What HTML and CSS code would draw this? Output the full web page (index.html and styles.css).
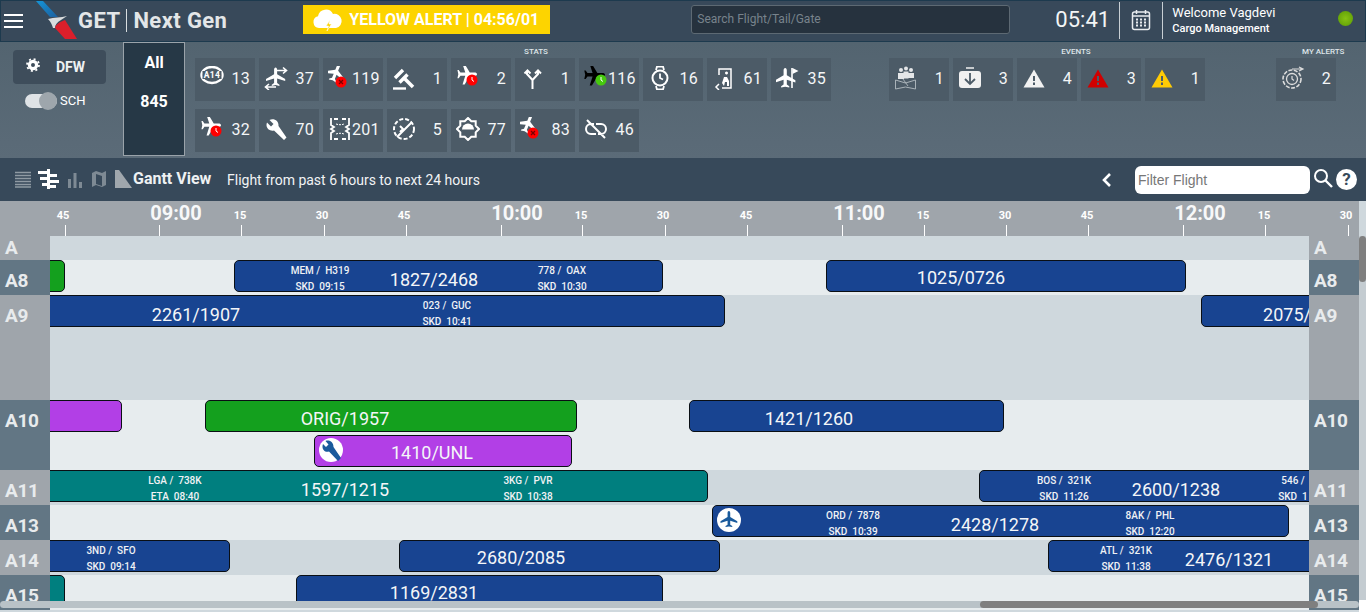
FILE: index.html
```html
<!DOCTYPE html>
<html>
<head>
    <meta charset="utf-8">
    <title>GET Next Gen</title>
    <link rel="stylesheet" href="styles.css">
</head>
<body>
<svg class="defs" width="0" height="0">
    <defs>
        <path id="plane" d="M12 0c1.200 0 1.900 1.200 1.900 3v5.500L24 14.500v2.500l-10.100-3.200v5.700l2.900 2V23L12 22l-4.800 1v-1.500l2.900-2v-5.700L0 17v-2.500l10.100-6V3C10.100 1.200 10.800 0 12 0z"/>
        <linearGradient id="blueband" x1="0" y1="0" x2="1" y2="1">
            <stop offset="0" stop-color="#1595d8"/>
            <stop offset="1" stop-color="#1c5f9e"/>
        </linearGradient>
    </defs>
</svg>

<header class="topbar">
    <div class="burger"><span></span><span></span><span></span></div>
    <svg class="logo" viewBox="0 0 44 41">
        <path d="M0 1h7l15 16h-8z" fill="url(#blueband)"/>
        <path d="M12 19c6-2 13-1 19-3l-6 4c-4 2-6 5-6 8h-2c-1-3-2-6-5-9z" fill="#d9dcde"/>
        <path d="M19 28c1-4 5-6 10-8l12 19H29z" fill="#db1f2b"/>
    </svg>
    <div class="brand"><span>GET</span><i></i><span>Next Gen</span></div>
    <div class="alert">
        <svg width="32" height="24" viewBox="0 0 32 24"><path d="M8 20a6 6 0 0 1-1-11.800A8 8 0 0 1 22 6a6.500 6.500 0 0 1 3 14z" fill="#fff"/><path d="M19 12l-4 6h2.500l-1.500 5 4.500-7H18z" fill="#fdd400" stroke="#fff" stroke-width=".6"/></svg>
        <span>YELLOW ALERT | 04:56/01</span>
    </div>
    <div class="search">Search Flight/Tail/Gate</div>
    <div class="clock">05:41</div>
    <div class="cal">
        <svg width="20" height="22" viewBox="0 0 20 22" fill="none" stroke="#e8ecef" stroke-width="1.500"><rect x="1.500" y="3" width="17" height="17.500" rx="2"/><path d="M5.500 1v4M14.500 1v4M1.500 7h17" /><path d="M5 10.500h2M9 10.500h2M13 10.500h2M5 13.500h2M9 13.500h2M13 13.500h2M5 16.500h2M9 16.500h2M13 16.500h2" stroke-width="1.800"/></svg>
    </div>
    <div class="user">
        <div class="user-name">Welcome Vagdevi</div>
        <div class="user-role">Cargo Management</div>
    </div>
    <div class="status-dot"></div>
</header>

<section class="stats">
    <div class="station">
        <div class="dfw">
            <svg width="14" height="14" viewBox="0 0 14 14"><circle cx="7" cy="7" r="3.600" fill="none" stroke="#fff" stroke-width="3.200"/><circle cx="7" cy="7" r="6" fill="none" stroke="#fff" stroke-width="1.800" stroke-dasharray="2 2.700"/></svg>
            <span>DFW</span>
        </div>
        <div class="sch"><span class="toggle"><b></b></span><span>SCH</span></div>
    </div>
    <div class="all"><span>All</span><span>845</span></div>

    <div class="group group-stats">
        <div class="group-title">STATS</div>
        <div class="tiles">
            <div class="tile"><svg viewBox="0 0 24 24" class="ic"><ellipse cx="12" cy="9" rx="10.500" ry="8" fill="none" stroke="#fff" stroke-width="2.400"/><rect x="2.500" y="5" width="19" height="8" fill="#4c5b67"/><text x="12" y="12.400" class="ic-text">A14</text></svg><span>13</span></div>
            <div class="tile"><svg viewBox="0 0 24 24" class="ic"><use href="#plane" fill="#fff" transform="translate(2 1.500) scale(.8)"/><path d="M12 4.500h10M19 1.500l3.500 3-3.500 3M2 21h10M5 18l-3.500 3 3.500 3" fill="none" stroke="#fff" stroke-width="1.600"/></svg><span>37</span></div>
            <div class="tile"><svg viewBox="0 0 24 24" class="ic"><use href="#plane" fill="#fff" transform="translate(-3 -2) rotate(22 12 12) scale(.8)"/><circle cx="13" cy="16" r="5.500" fill="#f00"/><path d="M11 14l4 4M15 14l-4 4" stroke="#700" stroke-width="1.300"/></svg><span>119</span></div>
            <div class="tile"><svg viewBox="0 0 24 24" class="ic"><path d="M3 12l8-8M7.500 16.500l8-8" stroke="#fff" stroke-width="3.400"/><path d="M12 12l9 9" stroke="#fff" stroke-width="3.600"/><path d="M1 22.500h13" stroke="#fff" stroke-width="2.400"/></svg><span>1</span></div>
            <div class="tile"><svg viewBox="0 0 24 24" class="ic"><use href="#plane" fill="#fff" transform="translate(-3 -2) rotate(90 12 12) scale(.85)"/><circle cx="16" cy="14" r="5.500" fill="#f00"/><path d="M16 11v3l2 1.500" fill="none" stroke="#fff" stroke-width="1"/></svg><span>2</span></div>
            <div class="tile"><svg viewBox="0 0 24 24" class="ic"><path d="M12.500 23v-9L7 8V5M12.500 14L18 8V5M4.500 7.500l3-3 3 3M15 7.500l3-3 3 3" fill="none" stroke="#fff" stroke-width="2"/></svg><span>1</span></div>
            <div class="tile"><svg viewBox="0 0 24 24" class="ic"><use href="#plane" fill="#000" transform="translate(-3 -2) rotate(90 12 12) scale(.9)"/><circle cx="17" cy="14" r="5.500" fill="#46c80e"/><path d="M17 11v3l2 1.500" fill="none" stroke="#fff" stroke-width="1"/></svg><span>116</span></div>
            <div class="tile"><svg viewBox="0 0 24 24" class="ic"><circle cx="12" cy="12" r="7.500" fill="none" stroke="#fff" stroke-width="2"/><path d="M8 4l1-3.500h6L16 4M8 20l1 3.500h6l1-3.500M12 7.500V12l3 1.500" fill="none" stroke="#fff" stroke-width="1.800"/></svg><span>16</span></div>
            <div class="tile"><svg viewBox="0 0 24 24" class="ic"><path d="M7 9V3h12v19H10M7 18l-3 3 3 3" fill="none" stroke="#fff" stroke-width="1.500"/><path d="M13 7a1.500 1.500 0 1 1 0 .1zM10 17l2-6h3l2 4v5h-2v-4h-2l-1 4z" fill="#fff"/></svg><span>61</span></div>
            <div class="tile"><svg viewBox="0 0 24 24" class="ic"><use href="#plane" fill="#fff" transform="translate(-1 2) scale(.85)"/><path d="M16 2v20" stroke="#fff" stroke-width="1.600"/><path d="M16.500 2l6 3-6 3z" fill="#fff"/></svg><span>35</span></div>
            <div class="tile"><svg viewBox="0 0 24 24" class="ic"><use href="#plane" fill="#fff" transform="translate(-3 -2) rotate(90 12 12) scale(.85)"/><circle cx="16" cy="14" r="5.500" fill="#f00"/><path d="M16 11v3l2 1.500" fill="none" stroke="#fff" stroke-width="1"/></svg><span>32</span></div>
            <div class="tile"><svg viewBox="0 0 24 24" class="ic"><path d="M22.500 20.500l-2.500 2.500L10 13.500c-3.500 1-7.500-1.500-7.500-5.500 0-1 .2-1.500.5-2.500L7 9.500 9.500 7 5.500 3c4.500-2 9.500 1 9 6z" fill="#fff"/></svg><span>70</span></div>
            <div class="tile"><svg viewBox="0 0 24 24" class="ic"><path d="M6 2h4M14 2h4M6 22h4M14 22h4" stroke="#fff" stroke-width="2"/><path d="M3 1v7l3 2-3 2 3 2-3 2v7M21 1v7l-3 2 3 2-3 2 3 2v7" fill="none" stroke="#fff" stroke-width="1.800"/><path d="M8 7c3 1 6 1 8 0M8 17c3-1 6-1 8 0" fill="none" stroke="#fff" stroke-width="1" stroke-dasharray="2 1"/></svg><span>201</span></div>
            <div class="tile"><svg viewBox="0 0 24 24" class="ic"><circle cx="12" cy="12" r="10" fill="none" stroke="#fff" stroke-width="2" stroke-dasharray="4 2"/><path d="M5 20L20 5M8 9l3 3-3 3" fill="none" stroke="#fff" stroke-width="2"/></svg><span>5</span></div>
            <div class="tile"><svg viewBox="0 0 24 24" class="ic"><path d="M12 1l3.300 3.300h4.400v4.400L23 12l-3.300 3.300v4.400h-4.400L12 23l-3.300-3.300H4.300v-4.400L1 12l3.300-3.300V4.300h4.400z" fill="none" stroke="#fff" stroke-width="2"/><path d="M6 12.500a6 6 0 0 1 12 0z" fill="#fff"/></svg><span>77</span></div>
            <div class="tile"><svg viewBox="0 0 24 24" class="ic"><use href="#plane" fill="#fff" transform="translate(-3 -2) rotate(22 12 12) scale(.8)"/><circle cx="13" cy="16" r="5.500" fill="#f00"/><path d="M11 14l4 4M15 14l-4 4" stroke="#700" stroke-width="1.300"/></svg><span>83</span></div>
            <div class="tile"><svg viewBox="0 0 24 24" class="ic"><path d="M10 7H7a5 5 0 0 0 0 10h5M14 17h3a5 5 0 0 0 0-10h-5M3 3l18 18" fill="none" stroke="#fff" stroke-width="2"/></svg><span>46</span></div>
        </div>
    </div>

    <div class="group group-events">
        <div class="group-title">EVENTS</div>
        <div class="tiles">
            <div class="tile"><svg viewBox="0 0 24 24" class="ic"><circle cx="7" cy="4" r="2" fill="#e4e6e8"/><circle cx="12" cy="2.500" r="2" fill="#e4e6e8"/><circle cx="17" cy="4" r="2" fill="#e4e6e8"/><path d="M4 7h6v6H4zM9.500 5.500h5v7h-5zM14 7h6v5h-6z" fill="#e4e6e8"/><path d="M1.500 14l10 3 10-3v9l-10-2-10 2zM9 13l5 7" fill="none" stroke="#a9b2b8" stroke-width="1"/></svg><span>1</span></div>
            <div class="tile"><svg viewBox="0 0 24 24" class="ic"><rect x="1" y="5" width="22" height="17" rx="3" fill="#f1f1f1"/><path d="M8 2h8" stroke="#f1f1f1" stroke-width="1.500"/><path d="M12 7v11M7 13l5 5 5-5" fill="none" stroke="#4c5b67" stroke-width="1.800"/></svg><span>3</span></div>
            <div class="tile"><svg viewBox="0 0 24 24" class="ic"><path d="M12 3.500L22.500 21.500h-21z" fill="#f1f1f1"/><path d="M12 10v5M12 16.500v2.500" stroke="#4c5b67" stroke-width="2"/></svg><span>4</span></div>
            <div class="tile"><svg viewBox="0 0 24 24" class="ic"><path d="M12 3.500L22.500 21.500h-21z" fill="#d00000"/><path d="M12 10v5M12 16.500v2.500" stroke="#4c5b67" stroke-width="2"/></svg><span>3</span></div>
            <div class="tile"><svg viewBox="0 0 24 24" class="ic"><path d="M12 3.500L22.500 21.500h-21z" fill="#ffcb05"/><path d="M12 10v5M12 16.500v2.500" stroke="#4c5b67" stroke-width="2"/></svg><span>1</span></div>
        </div>
    </div>

    <div class="group group-mine">
        <div class="group-title">MY ALERTS</div>
        <div class="tiles">
            <div class="tile"><svg viewBox="0 0 24 24" class="ic"><circle cx="11" cy="13" r="9" fill="none" stroke="#ddd" stroke-width="1.600" stroke-dasharray="4 1.500"/><circle cx="11" cy="13" r="5.500" fill="none" stroke="#ddd" stroke-width="1.300"/><path d="M11 10v3l2 1.500M11 3h10M18 1l4 2-4 2" fill="none" stroke="#ddd" stroke-width="1.200"/></svg><span>2</span></div>
        </div>
    </div>
</section>

<nav class="toolbar">
    <svg class="tool t1" width="18" height="18" viewBox="0 0 18 18"><path d="M1 2.500h16M1 5.500h16M1 8.500h16M1 11.500h16M1 14.500h16M1 17h16" stroke="#8f9aa3" stroke-width="1.500"/></svg>
    <svg class="tool t2" width="22" height="20" viewBox="0 0 22 20"><path d="M1 2h9v3H1zM3 8h7v3H3zM5 14h5v3H5zM10 0h3v20h-3zM13 5h7v3h-7zM13 11h9v3h-9zM13 16h6v3h-6z" fill="#fff"/></svg>
    <svg class="tool t3" width="16" height="18" viewBox="0 0 16 18"><path d="M1 9h3v9H1zM6.500 3h3v15h-3zM12 12h3v6h-3z" fill="#7e8a94"/></svg>
    <svg class="tool t4" width="18" height="18" viewBox="0 0 18 18"><path d="M2 3l4-2 6 2 4-2v14l-4 2-6-2-4 2zM6 4v10l6 2V6z" fill="#7e8a94"/></svg>
    <svg class="tool t5" width="18" height="18" viewBox="0 0 18 18"><path d="M1 0h4l13 18H1z" fill="#a0a7ad"/></svg>
    <span class="view-name">Gantt View</span>
    <span class="view-note">Flight from past 6 hours to next 24 hours</span>
    <svg class="back" width="12" height="16" viewBox="0 0 12 16"><path d="M9 2L3 8l6 6" fill="none" stroke="#fff" stroke-width="2.600"/></svg>
    <div class="filter">Filter Flight</div>
    <svg class="glass" width="20" height="20" viewBox="0 0 20 20"><circle cx="8" cy="8" r="6" fill="none" stroke="#fff" stroke-width="2"/><path d="M12.500 12.500L19 19" stroke="#fff" stroke-width="2.400"/></svg>
    <div class="help">?</div>
</nav>

<main class="gantt">
    <div class="axis">
        <div class="axis-gutter"></div>
        <div class="axis-scale">
            <span class="mark" style="left:13px">45</span>
            <span class="tick" style="left:15px"></span>
            <span class="mark big" style="left:126px">09:00</span>
            <span class="tick" style="left:109px"></span>
            <span class="mark" style="left:190px">15</span>
            <span class="tick" style="left:191px"></span>
            <span class="mark" style="left:272px">30</span>
            <span class="tick" style="left:274px"></span>
            <span class="mark" style="left:354px">45</span>
            <span class="tick" style="left:356px"></span>
            <span class="mark big" style="left:467px">10:00</span>
            <span class="tick" style="left:451px"></span>
            <span class="mark" style="left:531px">15</span>
            <span class="tick" style="left:532px"></span>
            <span class="mark" style="left:613px">30</span>
            <span class="tick" style="left:615px"></span>
            <span class="mark" style="left:696px">45</span>
            <span class="tick" style="left:697px"></span>
            <span class="mark big" style="left:809px">11:00</span>
            <span class="tick" style="left:792px"></span>
            <span class="mark" style="left:873px">15</span>
            <span class="tick" style="left:874px"></span>
            <span class="mark" style="left:955px">30</span>
            <span class="tick" style="left:956px"></span>
            <span class="mark" style="left:1037px">45</span>
            <span class="tick" style="left:1038px"></span>
            <span class="mark big" style="left:1150px">12:00</span>
            <span class="tick" style="left:1133px"></span>
            <span class="mark" style="left:1214px">15</span>
            <span class="tick" style="left:1215px"></span>
            <span class="mark" style="left:1296px">30</span>
            <span class="tick" style="left:1298px"></span>
        </div>
        <div class="axis-gutter"></div>
    </div>

    <div class="row dark h24">
        <div class="gate">A</div>
        <div class="lane"></div>
        <div class="gate">A</div>
    </div>

    <div class="row light h35">
        <div class="gate">A8</div>
        <div class="lane">
            <div class="bar green cut-left" style="left:-10px;width:25px"></div>
            <div class="bar blue" style="left:184px;width:429px">
                <span class="num low" style="left:199px">1827/2468</span>
                <span class="info" style="left:85px">MEM /&nbsp; H319<br>SKD&nbsp; 09:15</span>
                <span class="info" style="left:327px">778 /&nbsp; OAX<br>SKD&nbsp; 10:30</span>
            </div>
            <div class="bar blue" style="left:776px;width:360px"><span class="num" style="left:134px">1025/0726</span></div>
        </div>
        <div class="gate">A8</div>
    </div>

    <div class="row dark h105">
        <div class="gate">A9</div>
        <div class="lane">
            <div class="bar blue cut-left" style="left:-10px;width:685px">
                <span class="num low" style="left:155px">2261/1907</span>
                <span class="info" style="left:406px">023 /&nbsp; GUC<br>SKD&nbsp; 10:41</span>
            </div>
            <div class="bar blue" style="left:1151px;width:200px"><span class="num low" style="left:85px">2075/</span></div>
        </div>
        <div class="gate">A9</div>
    </div>

    <div class="row light h70">
        <div class="gate">A10</div>
        <div class="lane">
            <div class="bar purple cut-left" style="left:-10px;width:82px"></div>
            <div class="bar green" style="left:155px;width:372px"><span class="num mid" style="left:139px">ORIG/1957</span></div>
            <div class="bar blue" style="left:639px;width:315px"><span class="num mid" style="left:119px">1421/1260</span></div>
            <div class="bar purple lane2" style="left:264px;width:258px">
                <span class="badge">
                    <svg width="24" height="24" viewBox="0 0 24 24"><circle cx="12" cy="12" r="12" fill="#fff"/><path d="M22 20l-3 3L10 13.500c-3.500 1-6.500-1-6.500-5 0-1 .2-1.500.5-2.500L7 9 9.500 6.500 6.500 3c4-1.500 8 1 8 6z" fill="#1a5a9c"/></svg>
                </span>
                <span class="num" style="left:117px">1410/UNL</span>
            </div>
        </div>
        <div class="gate">A10</div>
    </div>

    <div class="row dark h35">
        <div class="gate">A11</div>
        <div class="lane">
            <div class="bar teal cut-left" style="left:-10px;width:668px">
                <span class="num low" style="left:304px">1597/1215</span>
                <span class="info" style="left:134px">LGA /&nbsp; 738K<br>ETA&nbsp; 08:40</span>
                <span class="info" style="left:487px">3KG /&nbsp; PVR<br>SKD&nbsp; 10:38</span>
            </div>
            <div class="bar blue" style="left:929px;width:400px">
                <span class="num low" style="left:196px">2600/1238</span>
                <span class="info" style="left:84px">BOS /&nbsp; 321K<br>SKD&nbsp; 11:26</span>
                <span class="info" style="left:313px">546 /<br>SKD&nbsp; 1</span>
            </div>
        </div>
        <div class="gate">A11</div>
    </div>

    <div class="row light h35">
        <div class="gate">A13</div>
        <div class="lane">
            <div class="bar blue" style="left:662px;width:577px">
                <span class="badge">
                    <svg width="24" height="24" viewBox="0 0 24 24"><circle cx="12" cy="12" r="12" fill="#fff"/><use href="#plane" fill="#1a5a9c" transform="translate(3.500 3) scale(.7)"/></svg>
                </span>
                <span class="num low" style="left:282px">2428/1278</span>
                <span class="info" style="left:140px">ORD /&nbsp; 7878<br>SKD&nbsp; 10:39</span>
                <span class="info" style="left:437px">8AK /&nbsp; PHL<br>SKD&nbsp; 12:20</span>
            </div>
        </div>
        <div class="gate">A13</div>
    </div>

    <div class="row dark h35">
        <div class="gate">A14</div>
        <div class="lane">
            <div class="bar blue cut-left" style="left:-10px;width:190px">
                <span class="info" style="left:70px">3ND /&nbsp; SFO<br>SKD&nbsp; 09:14</span>
            </div>
            <div class="bar blue" style="left:349px;width:321px"><span class="num" style="left:121px">2680/2085</span></div>
            <div class="bar blue" style="left:998px;width:300px">
                <span class="num low" style="left:180px">2476/1321</span>
                <span class="info" style="left:77px">ATL /&nbsp; 321K<br>SKD&nbsp; 11:38</span>
            </div>
        </div>
        <div class="gate">A14</div>
    </div>

    <div class="row light h35">
        <div class="gate">A15</div>
        <div class="lane">
            <div class="bar teal cut-left" style="left:-10px;width:25px"></div>
            <div class="bar blue" style="left:246px;width:367px"><span class="num" style="left:137px">1169/2831</span></div>
        </div>
        <div class="gate">A15</div>
    </div>

    <div class="hscroll"><div class="hthumb"></div></div>
    <div class="vscroll"><div class="vthumb"></div></div>
    <div class="corner"></div>
</main>
</body>
</html>
```

FILE: styles.css
```css
* {
    box-sizing: border-box;
}
html, body {
    margin: 0;
    height: 612px;
    overflow: hidden;
    font-family: Roboto, "Liberation Sans", sans-serif;
    color: #fff;
}
.defs {
    display: block;
    height: 0;
}

/* top bar */
.topbar {
    height: 42px;
    display: flex;
    align-items: center;
    background-color: #38495a;
    border: 1px solid #1d3a4e;
}
.burger {
    width: 19px;
    margin-left: 3px;
    display: flex;
    flex-direction: column;
    gap: 4px;
}
.burger span {
    height: 2px;
    background-color: #fff;
}
.logo {
    width: 44px;
    height: 41px;
    margin: -1px 0 0 13px;
    align-self: flex-start;
    flex: none;
}
.brand {
    display: flex;
    align-items: center;
    font-size: 22px;
    font-weight: 700;
    color: #e3e6e8;
    margin: -2px 0 0 -2px;
    letter-spacing: .4px;
}
.brand i {
    width: 1px;
    height: 23px;
    background-color: #d8dde0;
    margin: 0 6px;
}
.alert {
    width: 247px;
    height: 29px;
    margin: -3px 0 0 76px;
    padding-left: 8px;
    display: flex;
    align-items: center;
    gap: 6px;
    background-color: #fdd400;
    font-size: 16px;
    font-weight: 700;
}
.search {
    width: 319px;
    height: 29px;
    margin: -3px 0 0 141px;
    padding: 0 5px;
    line-height: 27px;
    font-size: 12px;
    color: #78838c;
    background-color: #26323e;
    border: 1px solid #5d6973;
    border-radius: 3px;
}
.clock {
    width: 64px;
    margin: -3px 0 0 45px;
    font-size: 22px;
    color: #f3f5f6;
}
.cal {
    width: 44px;
    height: 37px;
    margin-top: -2px;
    border: 1px solid #c8cfd4;
    border-width: 0 1px;
    display: flex;
    align-items: center;
    justify-content: center;
}
.user {
    margin: -2px 0 0 9px;
    width: 166px;
}
.user-name {
    font-size: 13px;
    line-height: 17px;
}
.user-role {
    font-size: 11px;
    line-height: 15px;
    font-weight: 500;
}
.status-dot {
    width: 15px;
    height: 15px;
    margin-top: -6px;
    border-radius: 50%;
    background: radial-gradient(circle at 50% 50%, #86c213, #5a9a05);
}

/* stats band */
.stats {
    height: 116px;
    display: flex;
    background: linear-gradient(#536470, #5b6b78);
}
.station {
    width: 123px;
    padding: 8px 0 0 13px;
}
.dfw {
    width: 93px;
    height: 34px;
    display: flex;
    align-items: center;
    gap: 16px;
    padding: 0 13px;
    background-color: #3e4d5b;
    border-radius: 4px;
    font-size: 14px;
    font-weight: 700;
}
.dfw svg {
    margin-top: -4px;
}
.dfw span {
    color: #eef1f3;
}
.sch {
    display: flex;
    align-items: center;
    gap: 3px;
    margin: 9px 0 0 12px;
    font-size: 13px;
}
.toggle {
    width: 32px;
    height: 14px;
    border-radius: 7px;
    background-color: #dfe3e6;
    position: relative;
}
.toggle b {
    position: absolute;
    right: 0;
    top: -2px;
    width: 18px;
    height: 18px;
    border-radius: 50%;
    background-color: #9ea6ac;
}
.all {
    width: 62px;
    height: 114px;
    display: flex;
    flex-direction: column;
    align-items: center;
    gap: 20px;
    padding-top: 10px;
    background-color: #263846;
    border: 1px solid #9aa3aa;
    font-size: 16px;
    font-weight: 700;
}
.group {
    flex: none;
}
.group-title {
    height: 16px;
    padding-top: 4px;
    line-height: 11px;
    font-size: 8px;
    font-weight: 500;
    text-align: center;
    white-space: nowrap;
    color: #dfe6ea;
}
.tiles {
    display: flex;
    flex-wrap: wrap;
    gap: 8px 4px;
}
.group-stats {
    width: 640px;
    margin-left: 10px;
}
.group-stats .group-title {
    padding-left: 42px;
}
.group-events {
    width: 316px;
    margin-left: 54px;
}
.group-events .group-title {
    padding-left: 58px;
}
.group-events .tiles {
    width: 320px;
}
.group-mine {
    width: 60px;
    margin-left: 71px;
}
.group-mine .group-title {
    margin-left: 26px;
}
.tile {
    width: 60px;
    height: 43px;
    display: flex;
    align-items: center;
    justify-content: space-between;
    padding: 0 5px 2px 5px;
    background-color: #4c5b67;
    font-size: 16px;
    color: #f4f6f7;
    letter-spacing: .3px;
}
.ic {
    width: 24px;
    height: 24px;
    margin-top: -2px;
    flex: none;
}
.ic-text {
    font-size: 8.500px;
    font-weight: 700;
    fill: #fff;
    text-anchor: middle;
}

/* toolbar */
.toolbar {
    height: 43px;
    display: flex;
    align-items: center;
    padding-left: 14px;
    background-color: #37495a;
}
.tool {
    flex: none;
    margin-top: -2px;
}
.t2 { margin-left: 5px; }
.t3 { margin-left: 8px; }
.t4 { margin-left: 7px; }
.t5 { margin-left: 6px; }
.view-name {
    font-size: 16px;
    font-weight: 700;
    margin: -2px 0 0 1px;
    width: 78px;
    white-space: nowrap;
    color: #eef1f3;
}
.view-note {
    font-size: 14px;
    margin-left: 16px;
    color: #f1f3f5;
}
.back {
    margin-left: 621px;
}
.filter {
    width: 175px;
    height: 28px;
    margin-left: 22px;
    padding: 0 3px;
    line-height: 28px;
    font-size: 14px;
    font-family: "Liberation Sans", sans-serif;
    color: #777;
    background-color: #fff;
    border-radius: 6px;
}
.glass {
    margin: -3px 0 0 3px;
}
.help {
    width: 21px;
    height: 21px;
    margin-left: 3px;
    border-radius: 50%;
    background-color: #fff;
    color: #37495a;
    font-size: 17px;
    font-weight: 700;
    line-height: 21px;
    text-align: center;
}

/* gantt */
.gantt {
    height: 411px;
    position: relative;
    overflow: hidden;
    background-color: #cfd8dd;
}
.axis {
    height: 35px;
    display: flex;
    width: 1359px;
    background-color: #9fa5ab;
}
.axis-gutter {
    width: 50px;
    flex: none;
}
.axis-scale {
    flex: 1;
    position: relative;
}
.mark {
    position: absolute;
    top: 9px;
    transform: translateX(-50%);
    font-size: 11px;
    font-weight: 700;
    line-height: 12px;
    color: #fff;
}
.mark.big {
    top: 0;
    font-size: 20px;
    line-height: 24px;
    color: #f7f8f9;
}
.tick {
    position: absolute;
    top: 24px;
    width: 1px;
    height: 11px;
    background-color: #fff;
}
.row {
    display: flex;
    width: 1359px;
}
.row.h24 { height: 24px; }
.row.h35 { height: 35px; }
.row.h70 { height: 70px; }
.row.h105 { height: 105px; }
.gate {
    width: 50px;
    flex: none;
    padding: 9px 0 0 5px;
    font-size: 19px;
    font-weight: 700;
    line-height: 24px;
    letter-spacing: -.3px;
    color: #e8ebed;
    position: relative;
    z-index: 2;
}
.h24 .gate {
    padding-top: 0;
}
.row.dark .gate {
    background-color: #9fa5ab;
}
.row.light .gate {
    background-color: #627684;
}
.lane {
    flex: 1;
    position: relative;
}
.row.dark .lane {
    background-color: #cfd8dd;
}
.row.light .lane {
    background-color: #e7ecee;
}
.bar {
    position: absolute;
    top: 0;
    height: 32px;
    border: 1px solid #0a0f14;
    border-radius: 5px;
}
.bar.lane2 {
    top: 35px;
}
.bar.blue { background-color: #184491; }
.bar.green { background-color: #14a01e; }
.bar.purple { background-color: #b23fe6; }
.bar.teal { background-color: #007f7f; }
.num {
    position: absolute;
    top: 5px;
    transform: translateX(-50%);
    font-size: 18px;
    line-height: 24px;
    white-space: nowrap;
    color: #f4f6f8;
}
.num.mid { top: 6px; }
.num.low { top: 7px; }
.info {
    position: absolute;
    top: 2px;
    transform: translateX(-50%);
    font-size: 10px;
    font-weight: 500;
    line-height: 16px;
    text-align: center;
    white-space: nowrap;
    color: #f0f2f5;
}
.badge {
    position: absolute;
    left: 4px;
    top: 2px;
    width: 24px;
    height: 24px;
}
.hscroll {
    position: absolute;
    left: 0;
    bottom: 4px;
    width: 1359px;
    height: 7px;
    background-color: #b9c2c7;
    border-radius: 4px;
    z-index: 3;
}
.hthumb {
    position: absolute;
    left: 980px;
    width: 338px;
    height: 7px;
    background-color: #7f7f7f;
    border-radius: 4px;
}
.vscroll {
    position: absolute;
    right: 0;
    top: 35px;
    bottom: 12px;
    width: 7px;
    background-color: #c4ccd1;
    z-index: 3;
}
.vthumb {
    height: 46px;
    background-color: #7f7f7f;
    border-radius: 4px;
}
.corner {
    position: absolute;
    right: 0;
    bottom: 0;
    width: 7px;
    height: 12px;
    background-color: #fff;
    z-index: 3;
}
```
